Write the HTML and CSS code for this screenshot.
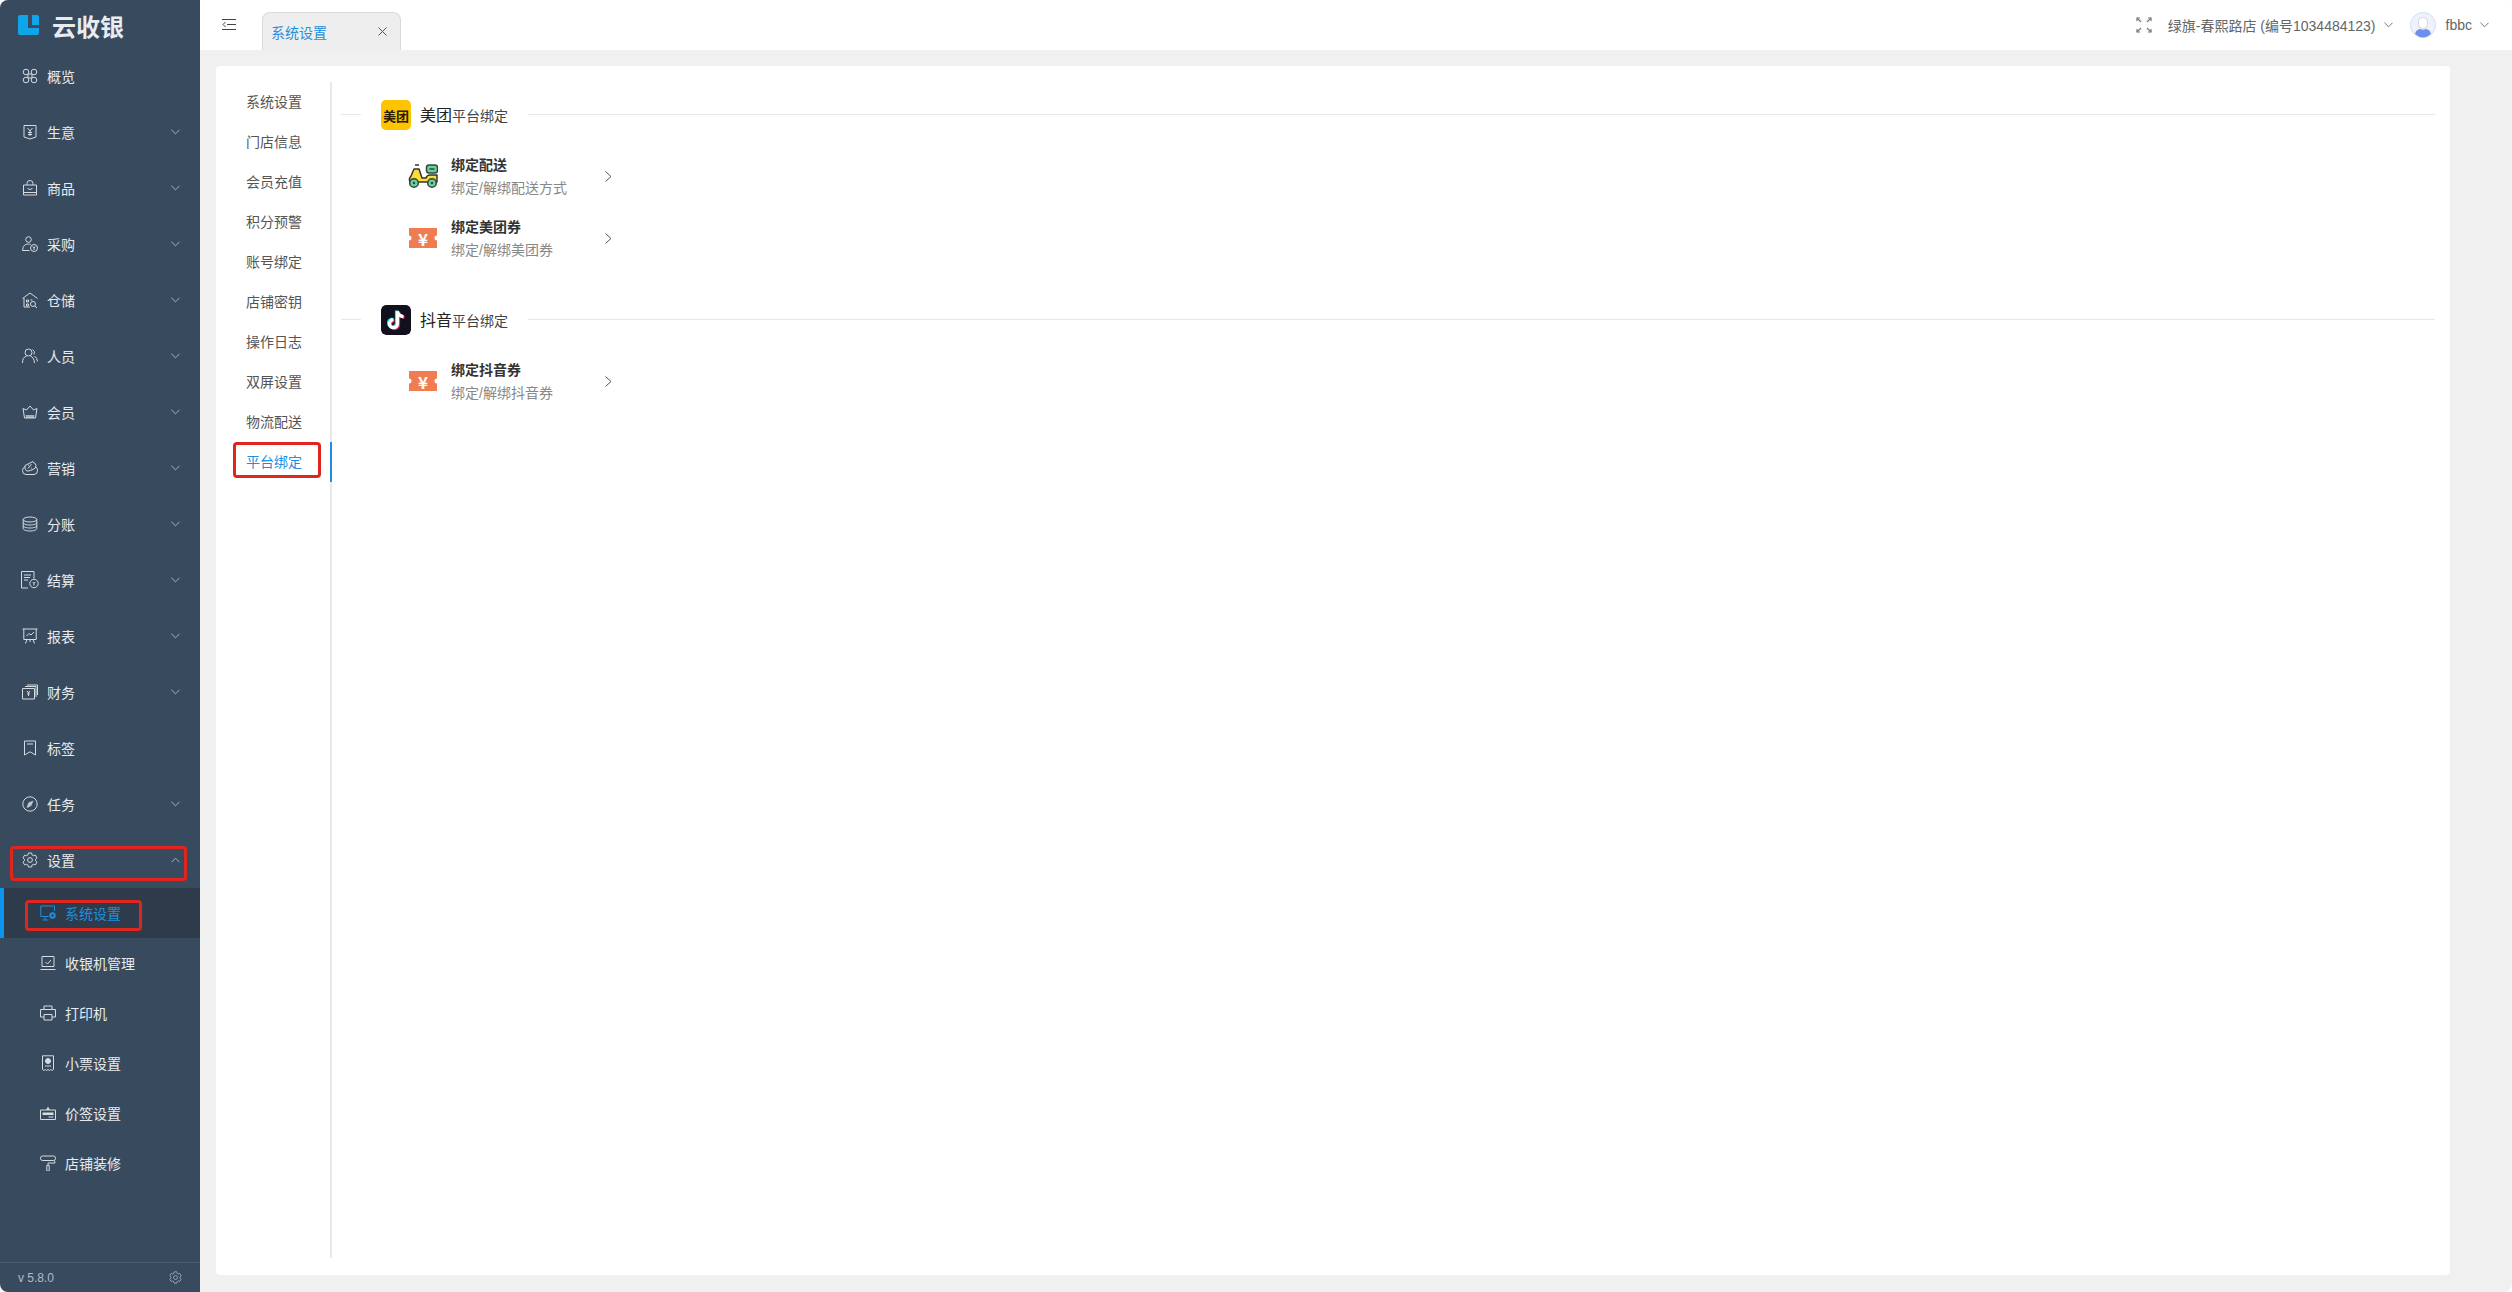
FILE: index.html
```html
<!DOCTYPE html>
<html lang="zh-CN">
<head>
    <meta charset="UTF-8">
    <title>系统设置</title>
    <link rel="stylesheet" href="styles.css">
</head>
<body>
<svg class="defs" width="0" height="0">
    <symbol id="gear" viewBox="0 0 16 16"><path d="M6.400 1h3.200l.5 2 1.300.7 2-.6 1.600 2.800-1.500 1.400v1.400l1.500 1.400-1.600 2.800-2-.6-1.300.7-.5 2H6.400l-.5-2-1.300-.7-2 .6L1 10.100l1.500-1.400V7.300L1 5.900l1.600-2.800 2 .6 1.300-.7z"/><circle cx="8" cy="8" r="2.400"/></symbol>
    <symbol id="down" viewBox="0 0 10 6"><path d="M.5.500 5 5 9.500.500"/></symbol>
    <symbol id="ticket" viewBox="0 0 28 20"><path fill="#f07c52" stroke="none" d="M0 0h28v7.500a2.500 2.500 0 0 0 0 5V20H0v-7.500a2.500 2.500 0 0 0 0-5z"/></symbol>
</svg>
<div class="app">
    <aside class="sidebar">
        <div class="logo">
            <svg width="21" height="20" viewBox="0 0 21 20"><path fill="#0ea5ea" d="M2 0h8v13h11v5a2 2 0 0 1-2 2H2a2 2 0 0 1-2-2V2a2 2 0 0 1 2-2z"/><path fill="#0ea5ea" d="M14 0h5a2 2 0 0 1 2 2v8h-7z"/></svg>
            <span>云收银</span>
        </div>
        <nav class="menu">
            <a class="menu-item">
                <svg class="ico" viewBox="0 0 16 16"><circle cx="4" cy="4" r="2.800"/><circle cx="12" cy="4" r="2.800"/><circle cx="4" cy="12" r="2.800"/><circle cx="12" cy="12" r="2.800"/><path d="M6 6h4v4H6z"/></svg>
                <span>概览</span>
            </a>
            <a class="menu-item">
                <svg class="ico" viewBox="0 0 16 16"><path d="M2 1.500h12v11.500l-6 2-6-2z"/><path d="M5.500 4 8 7l2.500-3M8 7v5M6 8.500h4M6 10.500h4"/></svg>
                <span>生意</span><svg class="arrow"><use href="#down"/></svg>
            </a>
            <a class="menu-item">
                <svg class="ico" viewBox="0 0 16 16"><path d="M1.500 5h13v10h-13zM5 5V3.500a3 3 0 0 1 6 0V5M1.500 12.500h13M5.500 8.500q2.500 2 5 0"/></svg>
                <span>商品</span><svg class="arrow"><use href="#down"/></svg>
            </a>
            <a class="menu-item">
                <svg class="ico" viewBox="0 0 16 16"><circle cx="6.500" cy="3.500" r="2.800"/><path d="M8.500 8.500Q7.500 8 6 8 1 8 .5 14.500h7"/><circle cx="12" cy="12" r="3.500"/><path d="M10.800 10.500 12 12l1.200-1.500M12 12v2"/></svg>
                <span>采购</span><svg class="arrow"><use href="#down"/></svg>
            </a>
            <a class="menu-item">
                <svg class="ico" viewBox="0 0 16 16"><path d="M.5 6.500 8 1l7.500 5.500M2 6v9h6"/><path d="M4.500 8h2v2h-2zM4.500 12h2v2h-2zM8.500 8h2"/><circle cx="11" cy="12" r="2.500"/><path d="m13 14 2 2"/></svg>
                <span>仓储</span><svg class="arrow"><use href="#down"/></svg>
            </a>
            <a class="menu-item">
                <svg class="ico" viewBox="0 0 16 16"><circle cx="6.500" cy="4.500" r="3.500"/><path d="M.5 15q0-6 4-6.800M8.500 8.200q3.500 1 4 6.800M10.500 1.500q3 1.500 1.500 5M12.500 8q2.500 1.500 3 5.500"/></svg>
                <span>人员</span><svg class="arrow"><use href="#down"/></svg>
            </a>
            <a class="menu-item">
                <svg class="ico" viewBox="0 0 16 16"><path d="M1 4.500 4.500 6 8 2l3.500 4L15 4.500 13.500 14h-11z"/><path fill="currentColor" d="M3.500 11h9l-.5 3H4z" stroke="none" opacity=".7"/></svg>
                <span>会员</span><svg class="arrow"><use href="#down"/></svg>
            </a>
            <a class="menu-item">
                <svg class="ico" viewBox="0 0 16 16"><path d="M3 6.500Q.5 8 .5 10.500q0 4 3.500 4h8q3.500 0 3.500-4 0-2-1.500-3.500"/><path d="M3 5.500 11 1.500l1 1.500q2 .5 2 2.500 0 3-3 4l-4.500 1.500H5Q3 10 3 8z"/><path d="M6 8.500 9.500 4M6 5.200h.8M9 8h.8"/></svg>
                <span>营销</span><svg class="arrow"><use href="#down"/></svg>
            </a>
            <a class="menu-item">
                <svg class="ico" viewBox="0 0 16 16"><ellipse cx="8" cy="3.500" rx="6.800" ry="2.500"/><path d="M1.200 3.500v9c0 1.400 3 2.500 6.800 2.500s6.800-1.100 6.800-2.500v-9M1.200 6.500C1.200 8 4.200 9 8 9s6.800-1 6.800-2.500M1.200 9.500c0 1.500 3 2.500 6.800 2.500s6.800-1 6.800-2.500"/></svg>
                <span>分账</span><svg class="arrow"><use href="#down"/></svg>
            </a>
            <a class="menu-item">
                <svg class="ico wide" viewBox="0 0 18 18"><path d="M7 17H.5V.5h12.500v7"/><path d="M3 4h7M3 6.500h6M3 9h4"/><circle cx="13" cy="12.500" r="4.200"/><path d="M11.800 11 13 12.500l1.200-1.500M13 12.500v2"/></svg>
                <span>结算</span><svg class="arrow"><use href="#down"/></svg>
            </a>
            <a class="menu-item">
                <svg class="ico" viewBox="0 0 16 16"><path d="M.5 1h15M1.800 1v10.500h12.400V1M5 11.500 3.500 15.500M11 11.500l1.500 4M8 11.500v2.500M4.500 8 7 5.500l2 1.500 3-3"/></svg>
                <span>报表</span><svg class="arrow"><use href="#down"/></svg>
            </a>
            <a class="menu-item">
                <svg class="ico" viewBox="0 0 16 16"><path d="M.5 4.500h12v10.500H.5zM3 2.500h11v10.500M5 1h10.500v10"/><path d="M5 7l1.500 2L8 7M6.500 9v3M5.200 10h2.600"/></svg>
                <span>财务</span><svg class="arrow"><use href="#down"/></svg>
            </a>
            <a class="menu-item">
                <svg class="ico" viewBox="0 0 16 16"><path d="M2.500 1h11v14L8 11.800 2.500 15zM5 4h6"/></svg>
                <span>标签</span>
            </a>
            <a class="menu-item">
                <svg class="ico" viewBox="0 0 16 16"><circle cx="8" cy="8" r="7.200"/><path fill="currentColor" stroke="none" d="M11.500 4.500 9.500 9.500 6.500 11.500 4.500 11.500 6.500 6.500z" opacity=".85"/></svg>
                <span>任务</span><svg class="arrow"><use href="#down"/></svg>
            </a>
            <a class="menu-item">
                <svg class="ico"><use href="#gear"/></svg>
                <span>设置</span><svg class="arrow up"><use href="#down"/></svg>
                <i class="mark mark-group"></i>
            </a>
            <a class="sub-item active">
                <svg class="ico" viewBox="0 0 16 16"><path d="M8.500 11.500H.8V1h13.700v5M5 11.500V15M2.500 15h6"/><circle cx="12.500" cy="10.500" r="2.200" stroke-width="2"/></svg>
                <span>系统设置</span>
                <i class="mark mark-sub"></i>
            </a>
            <a class="sub-item">
                <svg class="ico" viewBox="0 0 16 16"><path d="M2 1.500h12v10H2zM.5 14.500h15M5.500 7 7.500 9l3.500-4"/></svg>
                <span>收银机管理</span>
            </a>
            <a class="sub-item">
                <svg class="ico" viewBox="0 0 16 16"><path d="M4 4.500V1h8v3.500M4 12H.5V4.500h15V12H12M4 9.500h8V15H4z"/></svg>
                <span>打印机</span>
            </a>
            <a class="sub-item">
                <svg class="ico" viewBox="0 0 16 16"><path d="M2.500.8h11v13.700l-1.400 1-1.300-1-1.400 1-1.400-1-1.400 1-1.300-1-1.400 1-1.400-1z"/><circle cx="8" cy="6" r="2.500" fill="currentColor"/><path d="M5 11h6"/></svg>
                <span>小票设置</span>
            </a>
            <a class="sub-item">
                <svg class="ico" viewBox="0 0 16 16"><path d="M.5 5h15v9.500H.5z"/><path fill="currentColor" stroke="none" d="M6 5 8 1.500 10 5zM2.500 7.500h11v2.500h-11z"/><path d="M8.500 12h5"/></svg>
                <span>价签设置</span>
            </a>
            <a class="sub-item">
                <svg class="ico" viewBox="0 0 16 16"><rect x=".5" y="1" width="15" height="4.500" rx="2"/><path d="M14.500 5.500 15 8H8v2.500M6.800 10.500h2.400V16H6.800z"/></svg>
                <span>店铺装修</span>
            </a>
        </nav>
        <div class="version">
            <span>v 5.8.0</span>
            <svg class="ico small"><use href="#gear"/></svg>
        </div>
    </aside>

    <div class="main">
        <header class="topbar">
            <svg class="collapse" width="14" height="11" viewBox="0 0 14 11"><path d="M0 .5h14M5 5.500h9M0 10.500h14M3.500 3 1 5.500 3.500 8"/></svg>
            <div class="tab">
                <span>系统设置</span>
                <svg width="9" height="9" viewBox="0 0 9 9"><path d="m.5.500 8 8M8.500.500l-8 8"/></svg>
            </div>
            <div class="top-right">
                <svg class="fullscreen" width="16" height="16" viewBox="0 0 16 16"><path d="M1 1l4 4M15 1l-4 4M1 15l4-4M15 15l-4-4"/><path d="M1 4V1h3M12 1h3v3M1 12v3h3M12 15h3v-3"/></svg>
                <span class="shop">绿旗-春熙路店 (编号1034484123)</span>
                <svg class="top-arrow"><use href="#down"/></svg>
                <svg class="avatar" width="26" height="26" viewBox="0 0 26 26"><circle cx="13" cy="13" r="12.500" fill="#eef2fc" stroke="#d5dcf0"/><rect x="8.500" y="5.500" width="9" height="11" rx="4" fill="#fff" stroke="#cfd6e6"/><path fill="#6f8ff0" d="M5 22q1-4.500 5-5 3 1.500 6 0 4 .5 5 5-4 3.500-8 3.500T5 22z"/></svg>
                <span class="user">fbbc</span>
                <svg class="top-arrow"><use href="#down"/></svg>
            </div>
        </header>

        <main class="content">
            <div class="card">
                <ul class="side-tabs">
                    <li>系统设置</li>
                    <li>门店信息</li>
                    <li>会员充值</li>
                    <li>积分预警</li>
                    <li>账号绑定</li>
                    <li>店铺密钥</li>
                    <li>操作日志</li>
                    <li>双屏设置</li>
                    <li>物流配送</li>
                    <li class="current">平台绑定<i class="mark mark-tab"></i></li>
                </ul>
                <div class="bindings">
                    <div class="heading">
                        <span class="brand meituan">美团</span>
                        <span class="heading-text"><b>美团</b>平台绑定</span>
                    </div>
                    <div class="bind-row">
                        <svg class="bind-icon" width="30" height="26" viewBox="0 0 30 26">
                            <path d="M7 2h4" stroke="#333" stroke-width="1.500"/>
                            <rect x="18.500" y="2" width="11" height="8" rx="2.500" fill="#6fcf97" stroke="#2c4a3e" stroke-width="1.500"/>
                            <path d="M21.500 6h5" stroke="#2c4a3e" stroke-width="1.500"/>
                            <path d="M6 6h5l3 9h4q1-3 4-3h7v7H2q-1.500-3 1-6z" fill="#ffdb3a" stroke="#333" stroke-width="1.500" stroke-linejoin="round"/>
                            <circle cx="6" cy="20" r="4.300" fill="#6fcf97" stroke="#2c4a3e" stroke-width="1.500"/>
                            <circle cx="6" cy="20" r="1.200" fill="#2c4a3e"/>
                            <circle cx="24" cy="20" r="4.300" fill="#6fcf97" stroke="#2c4a3e" stroke-width="1.500"/>
                            <circle cx="24" cy="20" r="1.200" fill="#2c4a3e"/>
                        </svg>
                        <div class="bind-text">
                            <div class="bind-title">绑定配送</div>
                            <div class="bind-sub">绑定/解绑配送方式</div>
                        </div>
                        <svg class="chevron" width="7" height="11" viewBox="0 0 7 11"><path d="m.5.500 5.500 5-5.500 5"/></svg>
                    </div>
                    <div class="bind-row">
                        <div class="bind-icon ticket">
                            <svg width="28" height="20"><use href="#ticket"/></svg>
                            <span>¥</span>
                        </div>
                        <div class="bind-text">
                            <div class="bind-title">绑定美团券</div>
                            <div class="bind-sub">绑定/解绑美团券</div>
                        </div>
                        <svg class="chevron" width="7" height="11" viewBox="0 0 7 11"><path d="m.5.500 5.500 5-5.500 5"/></svg>
                    </div>

                    <div class="heading second">
                        <svg class="brand" width="30" height="30" viewBox="0 0 30 30">
                            <rect width="30" height="30" rx="5" fill="#12101c"/>
                            <g fill="none" stroke-width="3.200">
                                <path stroke="#25e4e0" d="M15.500 5.500v12.500a4 4 0 1 1-4-4M15.500 5.500q.5 4.500 6 5.500"/>
                                <path stroke="#f0255a" d="M17.500 7v12.500a4 4 0 1 1-4-4M17.500 7q.5 4.500 6 5.500"/>
                                <path stroke="#fff" d="M16.500 6.200v12.500a4 4 0 1 1-4-4M16.500 6.200q.5 4.500 6 5.500"/>
                            </g>
                        </svg>
                        <span class="heading-text"><b>抖音</b>平台绑定</span>
                    </div>
                    <div class="bind-row">
                        <div class="bind-icon ticket">
                            <svg width="28" height="20"><use href="#ticket"/></svg>
                            <span>¥</span>
                        </div>
                        <div class="bind-text">
                            <div class="bind-title">绑定抖音券</div>
                            <div class="bind-sub">绑定/解绑抖音券</div>
                        </div>
                        <svg class="chevron" width="7" height="11" viewBox="0 0 7 11"><path d="m.5.500 5.500 5-5.500 5"/></svg>
                    </div>
                </div>
            </div>
        </main>
    </div>
</div>
</body>
</html>
```

FILE: styles.css
```css
* {
    box-sizing: border-box;
}
html, body {
    height: 100%;
    margin: 0;
    background: #fff;
}
body {
    font-family: "Liberation Sans", "Noto Sans CJK SC", sans-serif;
    font-size: 14px;
    color: #333;
    overflow: hidden;
}
.defs {
    position: absolute;
}
symbol {
    overflow: visible;
}
.app {
    display: flex;
    height: 1292px;
    background: #f0f0f0;
    border-radius: 8px;
    overflow: hidden;
}

/* sidebar */
.sidebar {
    width: 200px;
    flex: none;
    display: flex;
    flex-direction: column;
    background: #384a5e;
    color: #e6ebf0;
}
.logo {
    height: 48px;
    flex: none;
    display: flex;
    align-items: center;
    padding: 2px 0 0 18px;
    gap: 13px;
    color: #e8ecf0;
    font-size: 24px;
    font-weight: bold;
}
.menu {
    flex: 1;
}
.menu-item, .sub-item {
    position: relative;
    display: flex;
    align-items: center;
}
.menu-item {
    height: 56px;
    padding-left: 22px;
    gap: 9px;
}
.sub-item {
    height: 50px;
    padding-left: 40px;
    gap: 9px;
}
.sub-item.active {
    background: #2d3b4b;
    border-left: 4px solid #0b95f0;
    padding-left: 36px;
    color: #1e8fe0;
}
.ico {
    width: 16px;
    height: 16px;
    flex: none;
    fill: none;
    stroke: currentColor;
    stroke-width: 1;
    opacity: .9;
}
.ico.wide {
    width: 18px;
    height: 18px;
    margin: 0 -1px 0 -1px;
}
.sub-item.active .ico {
    opacity: 1;
}
.arrow {
    position: absolute;
    right: 20px;
    top: 50%;
    width: 9px;
    height: 6px;
    margin-top: -3px;
    fill: none;
    stroke: #b5c0cb;
}
.arrow.up {
    transform: rotate(180deg);
}
.version {
    height: 30px;
    flex: none;
    display: flex;
    align-items: center;
    justify-content: space-between;
    padding: 0 18px;
    border-top: 1px solid #4a5c70;
    font-size: 12px;
    color: #b3bcc6;
}
.ico.small {
    width: 13px;
    height: 13px;
}

/* red annotation boxes */
.mark {
    position: absolute;
    border: 3px solid #e0241e;
    border-radius: 4px;
    pointer-events: none;
}
.mark-group {
    left: 10px;
    top: 14px;
    width: 177px;
    height: 35px;
}
.mark-sub {
    left: 21px;
    top: 12px;
    width: 117px;
    height: 31px;
}
.mark-tab {
    left: 17px;
    top: 0;
    width: 88px;
    height: 36px;
}

/* top bar */
.main {
    flex: 1;
    min-width: 0;
    display: flex;
    flex-direction: column;
}
.topbar {
    height: 50px;
    flex: none;
    display: flex;
    align-items: center;
    padding-left: 22px;
    background: #fff;
    color: #666;
}
.collapse {
    fill: none;
    stroke: #444;
    margin-top: -1px;
}
.tab {
    align-self: flex-end;
    width: 139px;
    height: 38px;
    margin-left: 26px;
    padding: 0 13px 0 8px;
    display: flex;
    align-items: center;
    justify-content: space-between;
    background: #eee;
    border: 1px solid #d9d9d9;
    border-bottom: 0;
    border-radius: 8px 8px 0 0;
    color: #1e8fe0;
}
.tab svg {
    fill: none;
    stroke: #555;
}
.top-right {
    margin-left: auto;
    padding-right: 23px;
    display: flex;
    align-items: center;
}
.fullscreen {
    fill: none;
    stroke: #777;
    stroke-width: 1.200;
    margin-right: 16px;
}
.shop {
    margin-top: -1px;
}
.top-arrow {
    width: 9px;
    height: 6px;
    margin-left: 8px;
    fill: none;
    stroke: #666;
}
.avatar {
    margin: 0 10px 0 17px;
}

/* content */
.content {
    flex: 1;
    min-height: 0;
    padding: 16px 62px 17px 16px;
}
.card {
    height: 100%;
    display: flex;
    padding-top: 16px;
    padding-bottom: 17px;
    background: #fff;
    border-radius: 4px;
}
.side-tabs {
    width: 116px;
    flex: none;
    margin: 0;
    padding: 0;
    list-style: none;
    border-right: 2px solid #e8e8e8;
    color: #555;
}
.side-tabs li {
    position: relative;
    height: 40px;
    margin-right: -2px;
    padding-left: 30px;
    line-height: 40px;
}
.side-tabs .current {
    color: #1e8fe0;
    border-right: 2px solid #1e8fe0;
}
.bindings {
    flex: 1;
    min-width: 0;
    padding: 18px 15px 0 9px;
}
.heading {
    display: flex;
    align-items: center;
    height: 30px;
}
.heading.second {
    margin-top: 36px;
}
.heading::before, .heading::after {
    content: "";
    height: 1px;
    margin-top: -2px;
    background: #e8e8e8;
}
.heading::before {
    width: 20px;
    margin-right: 20px;
}
.heading::after {
    flex: 1;
    margin-left: 20px;
}
.brand {
    flex: none;
    width: 30px;
    height: 30px;
    border-radius: 5px;
}
.meituan {
    display: flex;
    align-items: center;
    justify-content: center;
    background: #ffc300;
    color: #2a2000;
    font-size: 13px;
    font-weight: bold;
}
.heading-text {
    margin-left: 9px;
    margin-top: -2px;
    color: #444;
}
.heading-text b {
    font-size: 16px;
    font-weight: normal;
    color: #222;
}
.bind-row {
    display: flex;
    align-items: center;
    height: 62px;
    padding-left: 67px;
}
.heading + .bind-row {
    margin-top: 15px;
}
.bind-icon {
    width: 30px;
    flex: none;
}
.ticket {
    position: relative;
    display: flex;
    align-items: center;
    justify-content: center;
    height: 20px;
    color: #fff;
    font-family: "Noto Sans CJK SC", sans-serif;
    font-size: 17px;
    font-weight: bold;
}
.ticket svg {
    position: absolute;
    left: 1px;
    top: 0;
}
.ticket span {
    position: relative;
}
.bind-text {
    width: 154px;
    margin-left: 13px;
}
.bind-title {
    line-height: 20px;
    margin-bottom: 3px;
    font-weight: bold;
    color: #333;
}
.bind-sub {
    line-height: 20px;
    color: #888;
}
.chevron {
    fill: none;
    stroke: #555;
}
```
